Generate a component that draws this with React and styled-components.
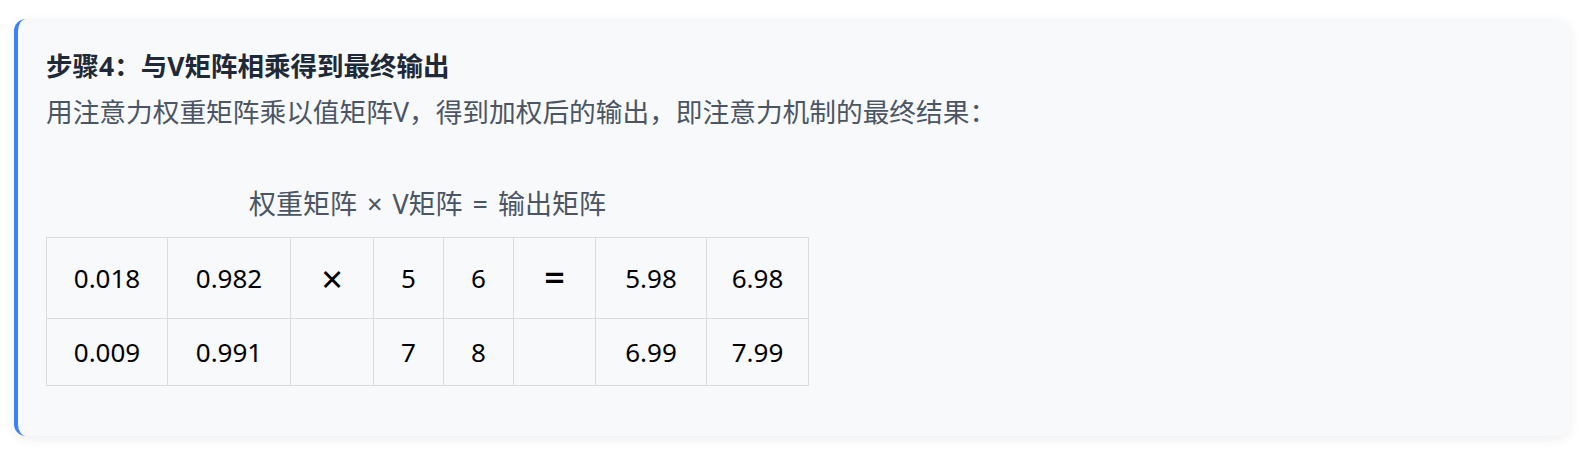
import React from 'react'
import styled, { createGlobalStyle } from 'styled-components'

const GlobalStyle = createGlobalStyle`
  html, body {
    margin: 0;
    padding: 0;
    background: #ffffff;
    font-family: "Noto Sans", "Noto Sans CJK SC", sans-serif;
  }
`

const weights = [
  ['0.018', '0.982'],
  ['0.009', '0.991'],
]
const values = [
  ['5', '6'],
  ['7', '8'],
]
const outputs = [
  ['5.98', '6.98'],
  ['6.99', '7.99'],
]

const widths = [121, 123, 83, 70, 70, 82, 111, 102]

const App = () => {
  return (
    <Page>
      <GlobalStyle />
      <StepCard>
        <StepTitle>步骤4：与V矩阵相乘得到最终输出</StepTitle>
        <StepText>用注意力权重矩阵乘以值矩阵V，得到加权后的输出，即注意力机制的最终结果：</StepText>
        <MatrixBlock>
          <Caption>权重矩阵 × V矩阵 = 输出矩阵</Caption>
          <MatrixTable>
            <colgroup>
              {widths.map((w, i) => (
                <col key={i} style={{ width: w }} />
              ))}
            </colgroup>
            <tbody>
              {weights.map((row, r) => (
                <tr key={r}>
                  <Cell>{row[0]}</Cell>
                  <Cell>{row[1]}</Cell>
                  <Cell operator="times">{r === 0 ? '×' : ''}</Cell>
                  <Cell>{values[r][0]}</Cell>
                  <Cell>{values[r][1]}</Cell>
                  <Cell operator="equals">{r === 0 ? '=' : ''}</Cell>
                  <Cell>{outputs[r][0]}</Cell>
                  <Cell>{outputs[r][1]}</Cell>
                </tr>
              ))}
            </tbody>
          </MatrixTable>
        </MatrixBlock>
      </StepCard>
    </Page>
  )
}

export default App

const Page = styled.div`
  padding: 19px 19px 14px 14px;
`

const StepCard = styled.section`
  background: #f8f9fb;
  border-left: 4px solid #3b82f6;
  border-radius: 12px;
  box-shadow: 0 3px 12px rgba(0, 0, 0, 0.07);
  padding: 27px 28px 50px 28px;
`

const StepTitle = styled.h3`
  margin: 0 0 6px;
  font-size: 26.5px;
  line-height: 40px;
  font-weight: 700;
  color: #1f2937;
`

const StepText = styled.p`
  margin: 0 0 52px;
  font-size: 26.7px;
  line-height: 40px;
  color: #4b5563;
`

const MatrixBlock = styled.div`
  display: inline-flex;
  flex-direction: column;
  align-items: center;
`

const Caption = styled.div`
  font-size: 27px;
  line-height: 40px;
  word-spacing: 3px;
  color: #4b5563;
  margin-bottom: 13px;
`

const MatrixTable = styled.table`
  border-collapse: collapse;
  table-layout: fixed;
`

const Cell = styled.td`
  border: 1px solid #dcdcdc;
  padding: 13px 0;
  text-align: center;
  color: #000000;
  font-size: ${p => (p.operator === 'times' ? '38px' : p.operator ? '36px' : '26px')};
  line-height: ${p => (p.operator ? '54px' : '40px')};
  font-weight: ${p => (p.operator === 'equals' ? 600 : 400)};
`
